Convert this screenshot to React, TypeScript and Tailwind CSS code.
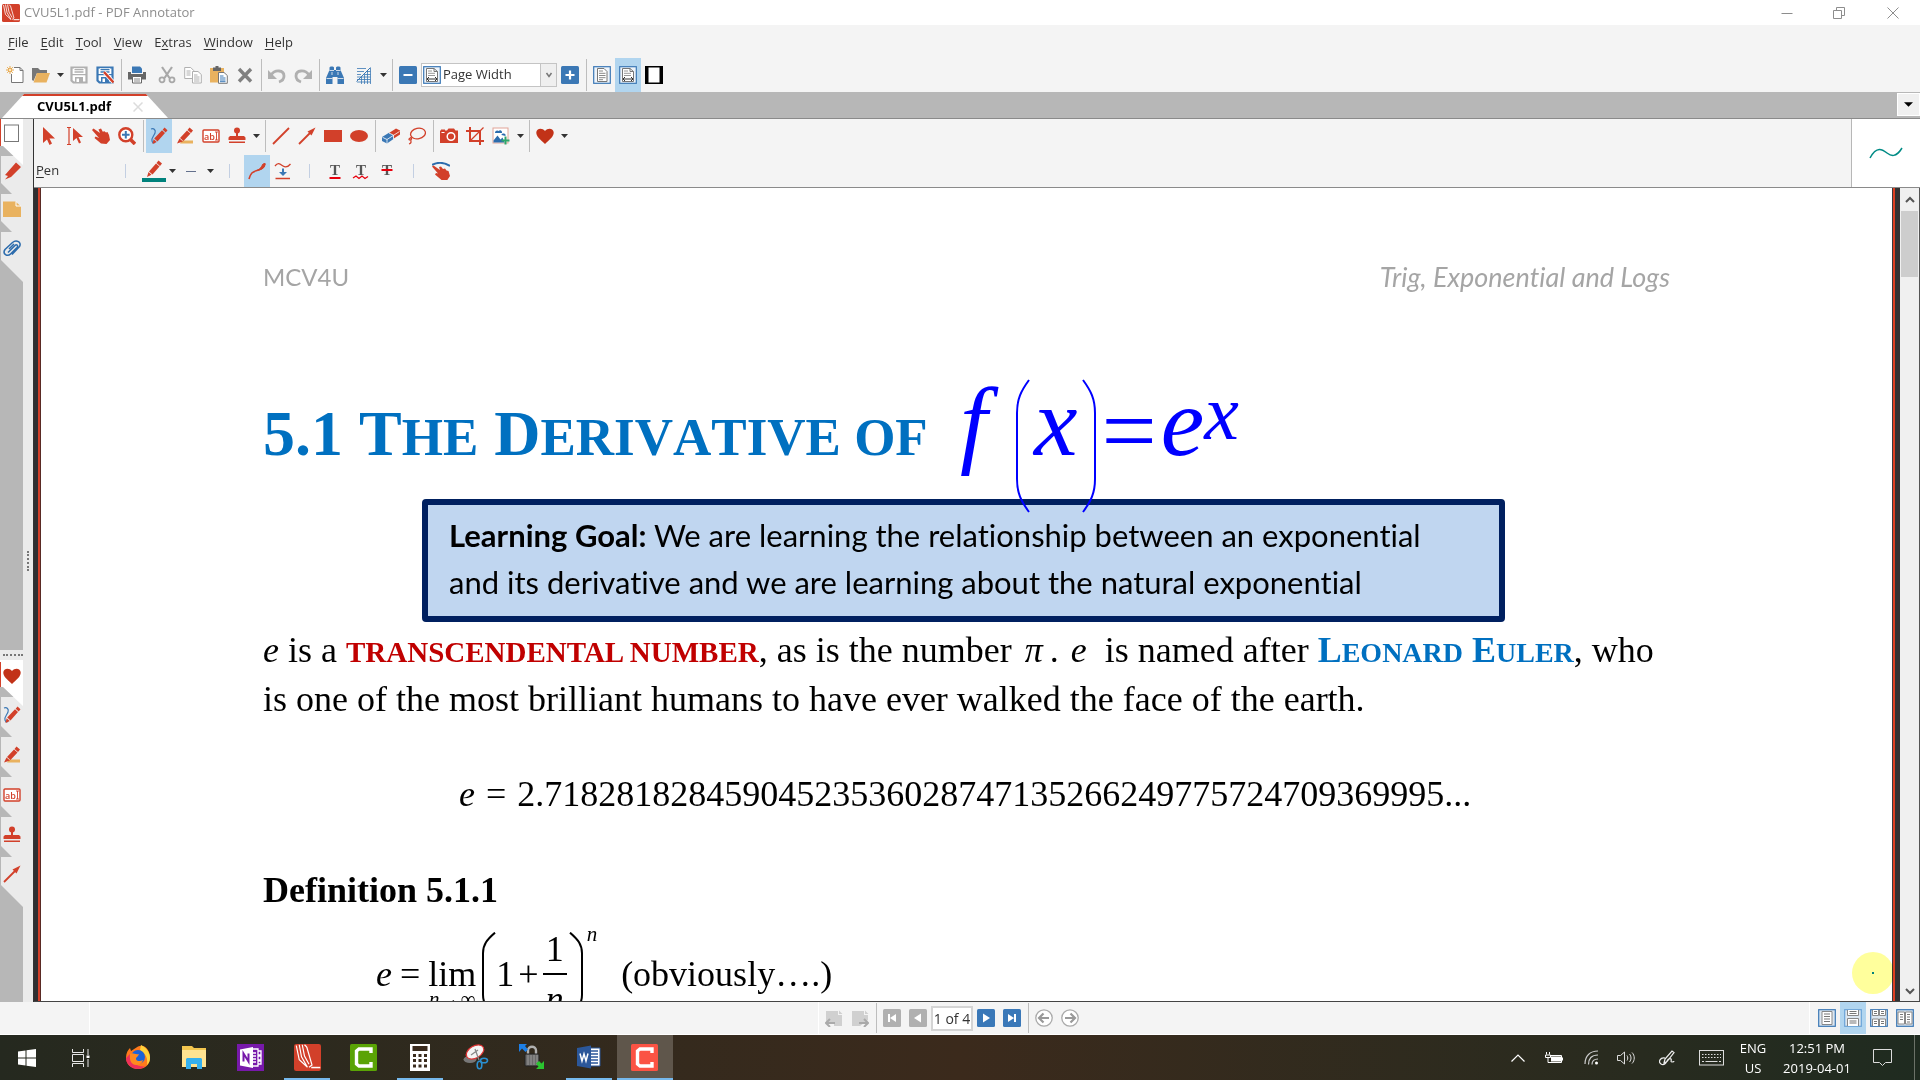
import { useState } from "react";
import type { ReactNode } from "react";
import { clsx } from "clsx";

interface IconProps {
  children: ReactNode;
  size?: string;
  box?: string;
}

const RED = "#d2402a";
const BLUE = "#3b78b5";
const GREY = "#b0b0b0";

function Icon({ children, size = "size-[18px]", box = "0 0 18 18" }: IconProps) {
  return (
    <svg viewBox={box} className={clsx("shrink-0", size)} fill="none" aria-hidden="true">
      {children}
    </svg>
  );
}

/* ---------- drawing tool icons (also used by the favourites strip) ---------- */

const PenIcon = () => (
  <Icon>
    <path d="M1 2c3-1 5 1 4 4S1 11 2 14s2 2 3 1" stroke={BLUE} strokeWidth="1.2" />
    <path d="M14.500.500l3 2.800-1.800 2.200-3-2.800z M12 3.300l3 2.800-7.500 8.400-3.300-3z M3.600 12.300l3.200 2.700L2.500 17z" fill={RED} />
  </Icon>
);

const MarkerIcon = () => (
  <Icon>
    <path d="M6 13.500h11v3H4z" fill="#e9b25f" />
    <path d="M13.500.5l3.500 3-2 2.500-3.500-3z M11 3.500L14.500 6.500l-7 7.500L4 11z M3.500 11.500l3.500 3L1 16.500z" fill={RED} />
  </Icon>
);

const TextBoxIcon = () => (
  <Icon>
    <rect x="1" y="3" width="16" height="12" rx="1" fill="#fff" stroke={RED} strokeWidth="1.400" />
    <path d="M13 5h3M13 13h3M14.500 5v8" stroke={RED} strokeWidth=".9" />
    <text x="2" y="12.500" fontSize="9" fontWeight="600" fontFamily="Open Sans, sans-serif" fill={RED}>ab</text>
  </Icon>
);

const StampIcon = () => (
  <Icon>
    <circle cx="9" cy="3.500" r="3" fill={RED} />
    <path d="M8 5h2v4h6l1.500 1.500V13H.5v-2.500L2 9h6z M1 14.500h16V16H1z" fill={RED} />
  </Icon>
);

const ArrowIcon = () => (
  <Icon>
    <path d="M1 17L13 5" stroke={RED} strokeWidth="1.800" />
    <path d="M17.500.5L9.500 4.500l4 4z" fill={RED} />
  </Icon>
);

const HeartIcon = () => (
  <Icon>
    <path d="M9 17C4 12.500.3 9.500.3 5.600.3 1.500 6 .3 9 4c3-3.700 8.700-2.500 8.700 1.600C17.700 9.500 14 12.500 9 17z" fill="#c23218" />
  </Icon>
);

const FloppyIcon = ({ color }: { color: string }) => (
  <>
    <path d="M1.500 1.500h15v15h-13l-2-2z" stroke={color} strokeWidth="2.200" fill="#fff" />
    <path d="M4 2h10v6H4z" fill="#fff" />
    <path d="M4.500 3.500h9M4.500 6h9M2 8.700h14" stroke={color} strokeWidth="1.300" />
    <path d="M5 11h8v6H5z" fill={color} />
    <path d="M6.500 12.500H9V16H6.500z" fill="#fff" />
  </>
);

const PageFrame = ({ children }: { children?: ReactNode }) => (
  <Icon>
    <rect x=".7" y=".7" width="16.600" height="16.600" fill="#eef4fb" stroke={BLUE} strokeWidth="1.200" />
    {children}
  </Icon>
);

const PageWidthIcon = () => (
  <PageFrame>
    <path d="M3.500 2.500h7.500l3.500 3v10h-11z" fill="#fff" stroke="#777" />
    <path d="M11 2.500v3h3.500" stroke="#777" />
    <path d="M5 5h4M5 7.300h7M5 9.500h7" stroke="#999" />
    <path d="M4 13h10M6 11l-2 2 2 2M12 11l2 2-2 2" stroke="#333" />
  </PageFrame>
);

const PageFullIcon = () => (
  <PageFrame>
    <path d="M4.500 2.500h6.500l3 3v10h-9.500z" fill="#fff" stroke="#777" />
    <path d="M6 5h4M6 7.300h6.500M6 9.500h6.500M6 11.700h6.500M6 13.700h4" stroke="#888" />
  </PageFrame>
);

const ScissorsIcon = () => (
  <Icon>
    <path d="M4 1l7.500 11M14 1L6.500 12" stroke="#a8a8a8" strokeWidth="2.200" />
    <circle cx="4" cy="13.800" r="2.500" stroke="#a8a8a8" strokeWidth="1.800" />
    <circle cx="14" cy="13.800" r="2.500" stroke="#a8a8a8" strokeWidth="1.800" />
  </Icon>
);

const PdfAnnotatorLogo = ({ size }: { size: string }) => (
  <Icon size={size}>
    <rect width="18" height="18" rx="1.500" fill={RED} />
    <path d="M1.500 1l2 9.500L9 15.500M3.500.5l1.500 8 4 7M5.500.5L7 8l3 5.500M8.500 2L7 .5M8.500 2l3.500 12-2 1.500" stroke="#fff" strokeWidth=".8" />
    <path d="M11.500 15.700h6" stroke="#fff" />
  </Icon>
);

/* ---------- small building blocks ---------- */

function Caret() {
  return (
    <span className="flex w-3 shrink-0 justify-center">
      <svg viewBox="0 0 7 4" className="h-1 w-[7px]" aria-hidden="true">
        <path d="M0 0h7L3.500 4z" fill="#333" />
      </svg>
    </span>
  );
}

function Sep({ light = false }: { light?: boolean }) {
  return (
    <span className="flex w-[6px] shrink-0 justify-center self-stretch py-px">
      <span className={clsx("w-px", light ? "my-2 bg-[#c3cfe2]" : "bg-[#bdbdbd]")} />
    </span>
  );
}

function Tool({ label, active = false, children }: { label: string; active?: boolean; children: ReactNode }) {
  return (
    <button
      type="button"
      aria-label={label}
      title={label}
      className={clsx("flex w-[26px] shrink-0 items-center justify-center self-stretch", active && "bg-[#b1d5ef]")}
    >
      {children}
    </button>
  );
}

function TitleBar() {
  return (
    <header className="flex h-[25px] shrink-0 items-center bg-white pl-[2px] text-[13px] text-[#8d8d8d]">
      <PdfAnnotatorLogo size="size-[18px]" />
      <span className="ml-1">CVU5L1.pdf - PDF Annotator</span>
      <div className="ml-auto flex">
        <button type="button" aria-label="Minimize" className="flex w-[52px] justify-center">
          <Icon size="size-3" box="0 0 12 12"><path d="M.5 6.500h11" stroke="#8d8d8d" /></Icon>
        </button>
        <button type="button" aria-label="Restore" className="flex w-[52px] justify-center">
          <Icon size="size-3" box="0 0 12 12"><path d="M.5 3.500h8v8h-8zM3.500 3V.5h8v8H9" stroke="#8d8d8d" /></Icon>
        </button>
        <button type="button" aria-label="Close" className="flex w-[55px] justify-center">
          <Icon size="size-3" box="0 0 12 12"><path d="M.5.5l11 11M11.500.5l-11 11" stroke="#8d8d8d" /></Icon>
        </button>
      </div>
    </header>
  );
}

const menus = [
  ["", "F", "ile"],
  ["", "E", "dit"],
  ["", "T", "ool"],
  ["", "V", "iew"],
  ["E", "x", "tras"],
  ["", "W", "indow"],
  ["", "H", "elp"],
];

function MenuBar() {
  return (
    <nav className="flex h-[33px] shrink-0 items-center gap-3 pt-[2px] pl-2 text-[13px] text-[#333]">
      {menus.map(([before, key, after]) => (
        <button type="button" key={before + key + after}>
          {before}<u className="underline-offset-2">{key}</u>{after}
        </button>
      ))}
    </nav>
  );
}

function MainToolbar() {
  return (
    <div className="flex h-[34px] shrink-0 items-center pl-[2px]">
      <Tool label="New">
        <Icon>
          <path d="M8 1.500h6l3 3v12H5.500V8" fill="#fff" stroke="#777" />
          <path d="M14 1.500v3h3" stroke="#777" />
          <path d="M4 0v8M0 4h8M1.200 1.200l5.600 5.600M6.800 1.200L1.200 6.800" stroke="#e9a94b" />
          <circle cx="4" cy="4" r="1.500" fill="#fff" stroke="#e9a94b" />
        </Icon>
      </Tool>
      <Tool label="Open">
        <Icon>
          <path d="M0 2h6l2 2h7v3H5L1.500 15 0 14z" fill="#777" />
          <path d="M5 7h13l-3.500 9.500H1.500z" fill="#e9b25f" />
        </Icon>
      </Tool>
      <Caret />
      <Tool label="Save"><Icon><FloppyIcon color="#b0b0b0" /></Icon></Tool>
      <Tool label="Save as">
        <Icon>
          <FloppyIcon color={BLUE} />
          <path d="M8 6l9.500 10.500" stroke="#fff" strokeWidth="4" />
          <path d="M8 6l9.500 10.500" stroke={RED} strokeWidth="2.400" />
        </Icon>
      </Tool>
      <Sep />
      <Tool label="Print">
        <Icon>
          <path d="M4 .5h8l2 2V7H4z" fill={BLUE} />
          <path d="M0 6h3v2h12V6h3v7.500H0z" fill="#666" />
          <path d="M4.500 10.500h9v6.500h-9z" fill="#fff" stroke="#666" />
          <path d="M6 13h6M6 15h6" stroke="#888" />
        </Icon>
      </Tool>
      <span className="w-1" />
      <Tool label="Cut"><ScissorsIcon /></Tool>
      <Tool label="Copy">
        <Icon>
          <path d="M.7 1.500h6l3 3v8h-9z" fill="#fff" stroke={GREY} />
          <path d="M2.500 5h4M2.500 7h4M2.500 9h4" stroke={GREY} />
          <path d="M8.500 5.500h5.500l3.300 3v8.500H8.500z" fill="#fff" stroke={GREY} />
          <path d="M10 9h3.500M10 11h5.500M10 13h5.500M10 15h5.500" stroke={GREY} />
        </Icon>
      </Tool>
      <Tool label="Paste">
        <Icon>
          <path d="M0 2h14v14.500H0z" fill="#e9b25f" />
          <path d="M3 1.500h2.500V0h3v1.500H11V5H3z" fill="#666" />
          <path d="M8.500 6.500H14l3.300 3v7.800H8.500z" fill="#fff" stroke="#777" />
          <path d="M10 10h3.500M10 12h5.500M10 14h5.500M10 15.700h5.500" stroke={BLUE} />
        </Icon>
      </Tool>
      <Tool label="Delete">
        <Icon><path d="M3 3l12 12.500M15 3L3 15.500" stroke="#808080" strokeWidth="3.400" /></Icon>
      </Tool>
      <Sep />
      <Tool label="Undo">
        <Icon>
          <path d="M3 9c4-6 13-5 13 1 0 3-2 5-5 6" stroke={GREY} strokeWidth="2.800" />
          <path d="M0 4v9h9z" fill={GREY} />
        </Icon>
      </Tool>
      <Tool label="Redo">
        <Icon>
          <path d="M15 9C11 3 2 4 2 10c0 3 2 5 5 6" stroke={GREY} strokeWidth="2.800" />
          <path d="M18 4v9H9z" fill={GREY} />
        </Icon>
      </Tool>
      <Sep />
      <Tool label="Find">
        <Icon>
          <path d="M3.500 1.500C3.500 0 8 0 8 1.500V4h2V1.500C10 0 14.500 0 14.500 1.500V4L18 12v6h-6.500v-7h-5v7H0v-6l3.500-8z" fill={BLUE} />
          <path d="M3.500 4.500H8M10 4.500h4.500M.5 12.500h6M11.500 12.500h6M6 6v3M12 6v3" stroke="#f4f4f4" strokeWidth=".8" />
        </Icon>
      </Tool>
      <span className="w-[3px]" />
      <Tool label="Grid">
        <Icon>
          <path d="M2 2.500h9M2 5.500h7M2 8.500h4M2 11h13.500M2 13.500h13.500M2 16h13.500M6.500 18v-8M9.500 18V7M12.500 18V4M15.500 18V2M10 8.500h5.500M12 5.500h3.500" stroke={BLUE} strokeWidth=".8" />
          <path d="M1.500 15.500L15.500 1.500" stroke={BLUE} />
        </Icon>
      </Tool>
      <Caret />
      <Sep />
      <Tool label="Zoom out">
        <Icon>
          <rect width="18" height="18" rx="1.500" fill={BLUE} />
          <path d="M4.500 9h9" stroke="#fff" strokeWidth="2" />
        </Icon>
      </Tool>
      <label className="flex h-6 w-[136px] shrink-0 items-center border border-[#c4c4c4] bg-white pl-px">
        <PageWidthIcon />
        <select aria-label="Zoom" className="h-full min-w-0 flex-1 appearance-none bg-white pl-[2px] text-[13px] text-[#333]">
          <option>Page Width</option>
        </select>
        <span className="flex h-full w-4 items-center justify-center border-l border-[#c4c4c4] bg-[#efefef]">
          <Icon size="size-2" box="0 0 8 8"><path d="M1.500 2L4 5.500 6.500 2" stroke="#777" strokeWidth="1.500" /></Icon>
        </span>
      </label>
      <Tool label="Zoom in">
        <Icon>
          <rect width="18" height="18" rx="1.500" fill={BLUE} />
          <path d="M4.500 9h9M9 4.500v9" stroke="#fff" strokeWidth="2.200" />
        </Icon>
      </Tool>
      <Sep />
      <Tool label="Full page"><PageFullIcon /></Tool>
      <Tool label="Page width" active><PageWidthIcon /></Tool>
      <Tool label="Full screen">
        <Icon>
          <rect width="18" height="18" fill="#000" />
          <rect x="3.500" y="1.500" width="11" height="15" fill="#fff" />
        </Icon>
      </Tool>
    </div>
  );
}

function TabStrip() {
  return (
    <div className="flex h-[27px] shrink-0 items-end border-b border-[#8a8a8a] bg-[#b7b7b7] pl-[2px]">
      <div className="flex h-6 w-[166px] flex-col bg-white [clip-path:polygon(22px_0,144px_0,100%_100%,0_100%)]">
        <span className="h-[2px] bg-[#d2402a]" />
        <div className="flex flex-1 items-center justify-between pr-[25px] pl-[35px]">
          <span className="text-[13px] font-bold text-black">CVU5L1.pdf</span>
          <button type="button" aria-label="Close tab">
            <Icon size="size-[10px]" box="0 0 10 10"><path d="M.5.5l9 9M9.500.5l-9 9" stroke="#dcdcdc" strokeWidth="1.500" /></Icon>
          </button>
        </div>
      </div>
      <button type="button" aria-label="Tab list" className="mb-[2px] ml-auto flex h-[23px] w-[23px] items-center justify-center border border-white bg-[#f0f0f0]">
        <svg viewBox="0 0 10 5" className="h-[5px] w-[9px]" aria-hidden="true"><path d="M0 0h10L5 5z" fill="#000" /></svg>
      </button>
    </div>
  );
}

/* ---------- left side bar ---------- */

const firstTab = "relative z-10 h-[46px] -mb-[9px] bg-white [clip-path:polygon(0_0,100%_0,100%_100%,3px_27px,0_27px)]";
const midTab = "bg-[#ebebeb] [clip-path:polygon(1px_0,100%_0,100%_100%,12px_100%,1px_calc(100%-11px))]";
const lastTab = "h-[50px] bg-[#ebebeb] pb-4 [clip-path:polygon(1px_0,100%_0,100%_100%,1px_28px)]";
const topTab = clsx(midTab, "h-[38px] pb-2");
const favTab = clsx(midTab, "h-10 pb-1");

function SideTab({ label, className, active = false, children }: { label: string; className: string; active?: boolean; children: ReactNode }) {
  return (
    <button type="button" aria-label={label} className={clsx("flex w-[23px] shrink-0 items-center justify-end", className)}>
      {active && <span className="mr-[2px] h-7 w-[2px] shrink-0 bg-[#d2402a]" />}
      {children}
      <span className="w-[2px] shrink-0" />
    </button>
  );
}

function SideBar() {
  return (
    <aside className="flex w-[33px] shrink-0 bg-[#ebebeb]">
      <div className="flex w-[23px] flex-col bg-[#b7b7b7]">
        <div className="flex flex-1 flex-col">
          <SideTab label="Pages" className={clsx(firstTab, "pb-[18px]")} active>
            <Icon><rect x="1.500" y="1" width="14" height="16.500" fill="#fff" stroke="#777" /></Icon>
          </SideTab>
          <SideTab label="Annotations" className={topTab}>
            <Icon><path d="M13 .5L18 5 8 15l-6 2.500L5 14l-3-1z" fill={RED} /></Icon>
          </SideTab>
          <SideTab label="Bookmarks" className={topTab}>
            <Icon>
              <path d="M0 1.500h12.500l5.500 5V17H0z" fill="#e9b25f" />
              <path d="M13 1.500V6h5" stroke="#fff" />
            </Icon>
          </SideTab>
          <SideTab label="Attachments" className={lastTab}>
            <Icon>
              <path d="M5 12.500L12 5.500c1.500-1.500 3.500 0 2 2L7.500 14c-3 3-8.500 0-5.500-4.500L9.500 2.500c4-3.500 9.500 0 7 4L9 14.500M6 9l5-5" stroke="#2c6cad" strokeWidth="1.500" />
            </Icon>
          </SideTab>
        </div>
        <div className="flex h-[10px] shrink-0 items-center bg-[#ebebeb] pl-[3px]">
          <span className="w-5 border-t-2 border-dotted border-[#777]" />
        </div>
        <div className="flex h-[342px] shrink-0 flex-col">
          <SideTab label="Favorites" className={clsx(firstTab, "pb-[14px]")} active><HeartIcon /></SideTab>
          <SideTab label="Pen" className={favTab}><PenIcon /></SideTab>
          <SideTab label="Marker" className={favTab}><MarkerIcon /></SideTab>
          <SideTab label="Text" className={favTab}><TextBoxIcon /></SideTab>
          <SideTab label="Stamp" className={favTab}><StampIcon /></SideTab>
          <SideTab label="Arrow" className={lastTab}><ArrowIcon /></SideTab>
        </div>
      </div>
      <div className="flex w-[10px] items-center justify-center">
        <span className="h-5 border-l-2 border-dotted border-[#777]" />
      </div>
    </aside>
  );
}

/* ---------- annotation toolbars ---------- */

function TextMark({ children }: { children: ReactNode }) {
  return (
    <Icon>
      <text x="9" y="13" textAnchor="middle" fontSize="15" fontWeight="700" fontFamily="Liberation Serif, serif" fill="#555">T</text>
      {children}
    </Icon>
  );
}

function ToolPanel() {
  return (
    <div className="flex h-[69px] shrink-0 border-b border-[#8a8a8a]">
      <div className="flex min-w-0 flex-1 flex-col pl-[2px]">
        <div className="flex h-[34px] items-center">
          <Tool label="Select"><Icon><path d="M3 0v16l4-3.500 2.500 5.500 2.500-1.500L9.500 11.500h5.500z" fill={RED} /></Icon></Tool>
          <Tool label="Select text">
            <Icon>
              <path d="M7 1v13l3.500-3 2.500 5.500 2-1L12.500 10H17z" fill={RED} />
              <path d="M1 .5h4M1 17.500h4M3 .5v17" stroke={RED} strokeWidth="1.200" />
            </Icon>
          </Tool>
          <Tool label="Pan">
            <Icon><path d="M0 3l1.500-1.500L8 6 6.500 2.500 9 1.500l2 3.500 1-1 2 1.500 1.500-.5 1.500 3 1 5-3.500 4-5.500-.5-6.500-5.500 1-1.500L7 11z" fill={RED} /></Icon>
          </Tool>
          <Tool label="Zoom">
            <Icon>
              <path d="M12 12l5 5" stroke={RED} strokeWidth="3.600" />
              <circle cx="7.800" cy="7.800" r="6.500" fill="#fff" stroke={RED} strokeWidth="2.400" />
              <path d="M4 7.800h7.600M7.800 4v7.600" stroke={BLUE} strokeWidth="2" />
            </Icon>
          </Tool>
          <Sep />
          <Tool label="Pen" active><PenIcon /></Tool>
          <Tool label="Marker"><MarkerIcon /></Tool>
          <Tool label="Text"><TextBoxIcon /></Tool>
          <Tool label="Stamp"><StampIcon /></Tool>
          <Caret />
          <Sep />
          <Tool label="Line"><Icon><path d="M1 17L17 1" stroke={RED} strokeWidth="1.800" /></Icon></Tool>
          <Tool label="Arrow"><ArrowIcon /></Tool>
          <Tool label="Rectangle"><Icon><path d="M0 3h18v12H0z" fill={RED} /></Icon></Tool>
          <Tool label="Ellipse"><Icon><ellipse cx="9" cy="9" rx="9" ry="6" fill={RED} /></Icon></Tool>
          <Sep />
          <Tool label="Eraser">
            <Icon>
              <path d="M7 6L14 1.500l4 2V7.500l-7 4.500-4-2z" fill={RED} />
              <path d="M0 10L7 5.800l4.500 2.200v4L5 16.500 0 14z" fill={BLUE} />
              <path d="M.5 10.300L5 12.500 17.500 4.500M5 12.500v4M7 6l4.500 2.200v4" stroke="#fff" strokeWidth=".8" />
            </Icon>
          </Tool>
          <Tool label="Lasso">
            <Icon>
              <ellipse cx="10" cy="6.500" rx="7.500" ry="5.300" transform="rotate(-12 10 6.500)" stroke={RED} strokeWidth="1.300" />
              <path d="M4 10c-3 1-4 3-2 3s2-3 1-1 2 4-2 5" stroke={RED} strokeWidth="1.200" />
            </Icon>
          </Tool>
          <Sep />
          <Tool label="Camera">
            <Icon>
              <path d="M0 3.500h1V2.500h4v1h2l1.500-2h5.500l1.500 2H18V16H0z" fill={RED} />
              <circle cx="11" cy="9.500" r="3.800" stroke="#fff" strokeWidth="1.500" />
              <path d="M1.500 5.500h3" stroke="#fff" />
            </Icon>
          </Tool>
          <Tool label="Crop">
            <Icon>
              <path d="M0 4h14v14M4 0v14h14" stroke={RED} strokeWidth="2" />
              <path d="M17.500.5L5 13" stroke={RED} strokeWidth="1.300" />
            </Icon>
          </Tool>
          <Tool label="Insert image">
            <Icon>
              <rect x="1" y="1" width="15" height="15" fill="#fff" stroke="#e2a497" />
              <path d="M3 6c0-3 3-3 3.500-2 2-2 4 0 3.500 2zM9.500 8c0-2 3-2 4-.5V9zM1.500 15.500v-2l4-5 3 4 2-2 2 5z" fill="#2c6cad" />
              <path d="M13.500 9.500v8M9.500 13.500h8" stroke="#2fa56b" strokeWidth="2" />
            </Icon>
          </Tool>
          <Caret />
          <Sep />
          <Tool label="Favorites"><HeartIcon /></Tool>
          <Caret />
        </div>
        <div className="flex h-[34px] items-center pt-[2px]">
          <span className="w-[86px] text-[13px] text-[#333]"><u className="underline-offset-2">P</u>en</span>
          <Sep light />
          <span className="w-[14px]" />
          <button type="button" aria-label="Pen color" className="flex flex-col items-center">
            <Icon>
              <path d="M13.500.5l3.500 3-2 2.500-3.500-3z M11 3.500l3.500 3-7 8L4 11.500z M3.500 12l3 2.700L2 17z" fill={RED} />
            </Icon>
            <span className="h-1 w-6 bg-[#00827c]" />
          </button>
          <Caret />
          <Tool label="Line width"><span className="h-px w-[10px] bg-[#63708c]" /></Tool>
          <Caret />
          <span className="w-[10px]" />
          <Sep light />
          <span className="w-3" />
          <Tool label="Freehand" active>
            <Icon><path d="M1 17c2-6 3-7 8-8.500S16 6 17 1.500" stroke={RED} strokeWidth="1.600" /><path d="M9 8.500c3-1 4-3 6-6.500l2-.5c0 4-3 6-8 7z" fill={RED} stroke={RED} /></Icon>
          </Tool>
          <Tool label="Smooth">
            <Icon>
              <path d="M1 4c3-4 5-2 8 0s5 1 7.500-2M1.500 16.500h14.500" stroke={RED} strokeWidth="1.300" />
              <path d="M8 6.500h2V10h3l-4 4-4-4h3z" fill={BLUE} />
            </Icon>
          </Tool>
          <span className="w-[10px]" />
          <Sep light />
          <span className="w-[10px]" />
          <Tool label="Underline"><TextMark><path d="M3.500 16h11" stroke="#e8000d" strokeWidth="2" /></TextMark></Tool>
          <Tool label="Squiggly underline"><TextMark><path d="M1 16l3-2 3 2.500 3-2.500 3 2.500 3-2" stroke="#e8000d" strokeWidth="1.300" /></TextMark></Tool>
          <Tool label="Strike out"><TextMark><path d="M3.500 8h11" stroke="#e8000d" strokeWidth="2" /></TextMark></Tool>
          <span className="w-[10px]" />
          <Sep light />
          <span className="w-3" />
          <Tool label="Touch">
            <Icon>
              <path d="M0 3c5-3 12-3 18 1" stroke="#2c6cad" strokeWidth="2" />
              <path d="M0 4.500L1.500 3.500 8 8 7 5l2-.5 2 2.500 2-.5 1.500 2 2 .5 1.500 5-3 4.500-5.500-.5-6.500-5.500 1-1.500 2 .5z" fill={RED} />
            </Icon>
          </Tool>
        </div>
      </div>
      <div className="flex w-[69px] shrink-0 items-center justify-center border-l border-[#b7b7b7] bg-white">
        <svg viewBox="0 0 34 12" className="h-3 w-[34px]" fill="none" aria-hidden="true">
          <path d="M1 11C8-2 14 3 18 6s9 5 15-5" stroke="#008b85" strokeWidth="1.500" />
        </svg>
      </div>
    </div>
  );
}

/* ---------- the PDF page ---------- */

function Fence({ side, size }: { side: "left" | "right"; size: string }) {
  return (
    <svg viewBox="0 0 14 134" preserveAspectRatio="none" className={clsx("shrink-0", size)} fill="none" aria-hidden="true">
      <path
        d={side === "left" ? "M13 1C5 12 1 20 1 34v66c0 14 4 22 12 33" : "M1 1c8 11 12 19 12 33v66c0 14-4 22-12 33"}
        stroke="currentColor"
        strokeWidth="2"
        vectorEffect="non-scaling-stroke"
      />
    </svg>
  );
}

function PdfPage() {
  return (
    <article className="min-w-0 flex-1 overflow-hidden bg-white px-[222px] pt-[73px] font-['Liberation_Serif',serif] text-[36px] leading-[49px] text-black">
      <div className="flex h-8 items-center justify-between font-['Lato',sans-serif] leading-8 text-[#a5a5a5] [font-variant-ligatures:none]">
        <span className="text-[24px]">MCV4U</span>
        <em className="text-[27px]">Trig, Exponential and Logs</em>
      </div>

      <h1 className="relative z-10 mt-[86px] flex h-[134px] items-baseline whitespace-nowrap text-[#0000ff]">
        <span className="w-[685px] text-[64px] leading-[64px] font-bold text-[#0070c0] [font-kerning:none]">
          5.1 T<span className="text-[53px]">HE</span> D<span className="text-[53px]">ERIVATIVE OF</span>
        </span>
        <i className="w-[68px] pl-3 text-[98px] leading-[86px]">f</i>
        <span className="self-start"><Fence side="left" size="h-[134px] w-[14px]" /></span>
        <i className="px-1 text-[98px] leading-[86px]">x</i>
        <span className="self-start"><Fence side="right" size="h-[134px] w-[14px]" /></span>
        <i className="pl-[6px] text-[98px] leading-[86px]">
          <span className="pr-1 align-[-8px] leading-[40px] not-italic">=</span>
          e<span className="align-[16px] text-[78px] leading-[40px]">x</span>
        </i>
      </h1>

      <div className="-mt-[14px] mr-[165px] ml-[159px] rounded-sm border-[6px] border-[#002060] bg-[#c0d6f0] pt-[7px] pb-[10px] pl-[21px] font-['Lato',sans-serif] text-[31px] leading-[47px] whitespace-nowrap [font-variant-ligatures:none]">
        <b>Learning Goal:</b> We are learning the relationship between an exponential
        <br />
        and its derivative and we are learning about the natural exponential
      </div>

      <p className="mt-1 whitespace-nowrap">
        <i>e</i> is a <b className="text-[29px] leading-none text-[#c00000]">TRANSCENDENTAL NUMBER</b>, as is the number{" "}
        <i className="px-1">π</i><span className="px-[3px]">.</span> <i>e</i>&nbsp; is named after{" "}
        <b className="text-[#0070c0]">
          L<span className="text-[28px] leading-none">EONARD</span> E<span className="text-[28px] leading-none">ULER</span>
        </b>
        , who
        <br />
        is one of the most brilliant humans to have ever walked the face of the earth.
      </p>

      <p className="mt-[46px] pl-[196px] whitespace-nowrap">
        <i>e</i> <span className="px-[2px]">=</span> 2.71828182845904523536028747135266249775724709369995...
      </p>

      <h2 className="mt-[47px] font-bold">Definition 5.1.1</h2>

      <div className="mt-[15px] flex h-[88px] items-center pl-[113px] leading-[36px]">
        <i>e</i>
        <span className="px-2">=</span>
        <span className="flex flex-col items-center pt-[14px]">
          lim
          <span className="text-[21px] leading-[14px]"><i>n</i>→∞</span>
        </span>
        <span className="pl-[6px]"><Fence side="left" size="h-[84px] w-[14px]" /></span>
        <span>1</span>
        <span className="px-1">+</span>
        <span className="flex flex-col items-center">
          <span>1</span>
          <span className="my-[6px] h-[2px] w-6 bg-black" />
          <i>n</i>
        </span>
        <span className="pl-[2px]"><Fence side="right" size="h-[84px] w-[14px]" /></span>
        <i className="self-start pl-1 text-[21px] leading-[8px]">n</i>
        <span className="pl-6">(obviously….)</span>
      </div>
    </article>
  );
}

function Viewer() {
  return (
    <div className="relative flex min-h-0 flex-1 border-b border-[#444]">
      <span className="w-1 bg-[#2f2f31]" />
      <span className="w-[3px] border-r border-[#5a2a24] bg-[#d2402a]" />
      <PdfPage />
      <span className="w-[3px] border-l border-[#3a3a3a] bg-[#de3f22]" />
      <span className="w-[5px] bg-[#333]" />
      <div className="flex w-5 flex-col items-center border-r border-[#555] bg-[#f0f0f0]">
        <button type="button" aria-label="Scroll up" className="flex h-[23px] items-center justify-center">
          <Icon size="size-[10px]" box="0 0 10 10"><path d="M1 7l4-4 4 4" stroke="#555" strokeWidth="2" /></Icon>
        </button>
        <span className="h-[66px] w-[17px] bg-[#cdcdcd]" />
        <button type="button" aria-label="Scroll down" className="mt-auto flex h-[20px] items-center justify-center">
          <Icon size="size-[10px]" box="0 0 10 10"><path d="M1 3l4 4 4-4" stroke="#555" strokeWidth="2" /></Icon>
        </button>
      </div>
      {/* pointer highlight */}
      <span className="absolute right-[26px] bottom-[7px] z-20 flex size-[42px] items-center justify-center rounded-full bg-[#ffff9c] mix-blend-multiply">
        <span className="size-[2px] bg-[#00827c]" />
      </span>
    </div>
  );
}

/* ---------- status bar ---------- */

function NavButton({ label, disabled = false, d }: { label: string; disabled?: boolean; d: string }) {
  return (
    <Tool label={label}>
      <Icon>
        <rect width="18" height="18" rx="1.500" fill={disabled ? GREY : "#3a78b8"} />
        <path d={d} fill="#fff" />
      </Icon>
    </Tool>
  );
}

const layouts = [
  { label: "Single page", d: "M4 2.500h10v13H4z", lines: "M6 5h6M6 7.500h6M6 10h6M6 12.500h6" },
  { label: "Continuous", d: "M3.500 1v5.500h11V1M3.500 17V9.500h11V17", lines: "M5.500 2.500h7M5.500 4.500h7M5.500 12h7M5.500 14h7" },
  { label: "Two pages continuous", d: "M2.500 1v5.500h6V1M9.500 1v5.500h6V1M2.500 17v-7h6v7M9.500 17v-7h6v7", lines: "M4 2.500h3M11 2.500h3M4 4.500h3M11 4.500h3M4 12.500h3M11 12.500h3M4 14.500h3M11 14.500h3" },
  { label: "Two pages", d: "M2 3h6.500v12H2zM9.500 3H16v12H9.500z", lines: "M4 5.500h3M4 8h3M4 10.500h3M11 5.500h3M11 8h3M11 10.500h3M11 13h3" },
];

function StatusBar() {
  const [page, setPage] = useState("1 of 4");

  return (
    <div className="flex h-[33px] shrink-0 items-center border-b border-white bg-[#f4f4f4]">
      <div className="flex flex-1 justify-between self-stretch">
        <span className="ml-[89px] w-px bg-white" />
        <span className="mr-[2px] w-px bg-white" />
      </div>
      <div className="flex items-center self-stretch pr-4">
        <Tool label="Import page">
          <Icon><path d="M1 2h12v4h4v11H9v-3H1z" fill="#d0d0d0" /><path d="M14 1.500V5h3.500z" fill="#d0d0d0" /><path d="M1 14h9M5 10l-4 4 4 4" stroke="#aaa" strokeWidth="2" /></Icon>
        </Tool>
        <Tool label="Export page">
          <Icon><path d="M1 2h12v4h4v5L9 17H1z" fill="#d0d0d0" /><path d="M14 1.500V5h3.500z" fill="#d0d0d0" /><path d="M8 14h9M13 10l4 4-4 4" stroke="#aaa" strokeWidth="2" /></Icon>
        </Tool>
        <Sep />
        <NavButton label="First page" disabled d="M5 5h2v8H5zM13 5v8L7 9z" />
        <NavButton label="Previous page" disabled d="M12 4.500v9L5 9z" />
        <input
          aria-label="Page"
          value={page}
          onChange={(e) => setPage(e.target.value)}
          className="h-[25px] w-[42px] shrink-0 border-2 border-[#d4d4d4] bg-white text-center text-[14px] text-[#333]"
        />
        <NavButton label="Next page" d="M6 4.500v9L13 9z" />
        <NavButton label="Last page" d="M5 5v8l6-4zM11 5h2v8h-2z" />
        <Sep />
        <Tool label="Back">
          <Icon><circle cx="9" cy="9" r="8.200" fill="#fff" stroke="#aaa" strokeWidth="1.300" /><path d="M4 9h10M8.500 4.500L4 9l4.500 4.500" stroke="#999" strokeWidth="2.200" /></Icon>
        </Tool>
        <Tool label="Forward">
          <Icon><circle cx="9" cy="9" r="8.200" fill="#fff" stroke="#aaa" strokeWidth="1.300" /><path d="M4 9h10M9.500 4.500L14 9l-4.500 4.500" stroke="#999" strokeWidth="2.200" /></Icon>
        </Tool>
      </div>
      <div className="flex flex-1 items-center justify-end self-stretch">
        <span className="mr-1 w-px self-stretch bg-white" />
        {layouts.map((l, i) => (
          <Tool key={l.label} label={l.label} active={i === 1}>
            <Icon>
              <rect x=".7" y=".7" width="16.600" height="16.600" fill="#dce6f0" stroke={i === 1 ? "#6aa3d8" : BLUE} strokeWidth="1.200" />
              <path d={l.d} fill="#fff" stroke="#888" />
              <path d={l.lines} stroke="#777" strokeWidth="1.200" />
            </Icon>
          </Tool>
        ))}
        <span className="w-[2px]" />
      </div>
    </div>
  );
}

/* ---------- Windows task bar ---------- */

const CamtasiaIcon = ({ color }: { color: string }) => (
  <Icon size="size-[27px]" box="0 0 27 27">
    <rect width="27" height="27" rx="1.500" fill={color} />
    <path d="M21 9V5H9L6.500 7v13L9 22h12v-4" stroke="#fff" strokeWidth="3.400" />
  </Icon>
);

const apps = [
  {
    label: "Firefox",
    icon: (
      <Icon size="size-6" box="0 0 24 24">
        <path d="M12 1.500c7-3 12 4 12 11s-5 11.500-12 11.500S0 19 0 12.500C0 8 2 5 4 3l1 3z" fill="#ff7a1c" />
        <path d="M15 0c6 3 9 8 9 13 0 3-1 5-3 7 1-7-1-11-7-15z" fill="#ffd23c" />
        <path d="M0 13c0 6 5 11 12 11 3 0 5-1 7-2.500C11 22 5 18 4 9z" fill="#f0305a" />
        <circle cx="12" cy="12" r="7" fill="#1b63d8" />
        <path d="M4 9c3-2 5 1 9 0-1 3-3 3-3 5s4 3 7 1c-1 4-4 5-7 5-4 0-7-4-6-11z" fill="#ff8a1f" />
      </Icon>
    ),
  },
  {
    label: "File Explorer",
    icon: (
      <Icon size="size-6" box="0 0 24 24">
        <path d="M0 1h10l2 2h12v18H0z" fill="#f3c64f" />
        <path d="M0 5h24v17H0z" fill="#ffe391" />
        <path d="M4 24V14l1-1h14l1 1v10h-5v-5H9v5z" fill="#35b0ee" />
      </Icon>
    ),
  },
  {
    label: "OneNote",
    icon: (
      <Icon size="size-[27px]" box="0 0 27 27">
        <rect width="27" height="27" fill="#7719aa" />
        <path d="M15 5h6v17h-6M21 7h3v4h-3M21 12h3v4h-3M21 17h3v3h-3M16 9h3M16 12h3M16 15h3M16 18h3" stroke="#fff" strokeWidth="1.300" />
        <path d="M3 5.500L16 3v21L3 21.500z" fill="#fff" />
        <path d="M6.500 17.500v-8l5 8v-8" stroke="#7719aa" strokeWidth="2" />
      </Icon>
    ),
  },
  { label: "PDF Annotator", running: true, icon: <PdfAnnotatorLogo size="size-[27px]" /> },
  { label: "Camtasia", icon: <CamtasiaIcon color="#5aa305" /> },
  {
    label: "Calculator",
    running: true,
    icon: (
      <Icon size="h-[27px] w-5" box="0 0 20 27">
        <rect width="20" height="27" fill="#fff" />
        <path d="M2.500 2h15v5h-15zM3 10h3v3H3zM8.500 10h3v3h-3zM14 10h3v3h-3zM3 15h3v3H3zM8.500 15h3v3h-3zM14 15h3v3h-3zM3 20.500h3v3H3zM8.500 20.500h3v3h-3zM14 20.500h3v3h-3z" fill="#3a2b1d" />
      </Icon>
    ),
  },
  {
    label: "Snipping Tool",
    icon: (
      <Icon size="size-[26px]" box="0 0 26 26">
        <ellipse cx="7" cy="15.500" rx="6.500" ry="3.500" fill="#777" />
        <ellipse cx="12" cy="8" rx="9.500" ry="6" transform="rotate(-30 12 8)" fill="#f4f4f4" stroke="#d33" strokeWidth="1.200" />
        <path d="M12 5l4 11M8 11l7-5" stroke="#888" strokeWidth="1.300" />
        <ellipse cx="21" cy="16.500" rx="3.500" ry="2.300" stroke="#2a8fd0" strokeWidth="1.600" />
        <ellipse cx="16.500" cy="21" rx="2.300" ry="3.800" stroke="#2a8fd0" strokeWidth="1.600" />
      </Icon>
    ),
  },
  {
    label: "Network lock",
    icon: (
      <Icon size="size-[26px]" box="0 0 26 26">
        <path d="M9 12V6.500c0-5 8-5 8 0V12" stroke="#b0b0b0" strokeWidth="2.400" />
        <rect x="6" y="10" width="14" height="12" rx="1" fill="#6a6a6a" stroke="#222" />
        <path d="M9 11v10M12 11v10M15 11v10M18 11v10" stroke="#999" />
        <path d="M0 0h8L6 2l3 3.500L6.500 8 3 4.500 0 8z" fill="#1d7fe6" />
        <path d="M25 25h-8l2.500-2.500L17 19.500l3-2.500 2.500 2.500L25 17z" fill="#2bc430" />
      </Icon>
    ),
  },
  {
    label: "Word",
    running: true,
    icon: (
      <Icon size="size-6" box="0 0 24 24">
        <path d="M13 3h10v18H13z" fill="#fff" stroke="#2b579a" />
        <path d="M14 6h7M14 9h7M14 12h7M14 15h7M14 18h7" stroke="#2b579a" strokeWidth="1.300" />
        <path d="M0 3L14 .5v23L0 21z" fill="#2b579a" />
        <path d="M3 8.500L5 16l2-7 2 7 2-7.500" stroke="#fff" strokeWidth="1.500" />
      </Icon>
    ),
  },
  { label: "Camtasia Recorder", running: true, active: true, icon: <CamtasiaIcon color="#fb5344" /> },
];

function TaskBar() {
  return (
    <footer className="flex h-[45px] shrink-0 items-stretch bg-linear-to-r from-[#25291f] via-[#3b2a1c] to-[#1f2b20] text-[13px] leading-5 text-white">
      <button type="button" aria-label="Start" className="flex w-[54px] items-center justify-center">
        <Icon size="size-[18px]">
          <path d="M0 2.500L7.500 1.500V8.500H0zM8.500 1.300L18 0v8.500H8.500zM0 9.500h7.500v7L0 15.500zM8.500 9.500H18V18l-9.500-1.300z" fill="#fff" />
        </Icon>
      </button>
      <button type="button" aria-label="Task view" className="flex w-[54px] items-center justify-center">
        <Icon size="size-[18px]">
          <path d="M.5 0v3.500h11V0M.5 18v-3.500h11V18M.5 5.500h11v7H.5zM16 0v6M16 10v8" stroke="#e8e8e8" />
          <path d="M14.500 6.500h3v2.500h-3z" fill="#fff" />
        </Icon>
      </button>
      <div className="ml-[2px] grid w-[563px] grid-cols-10">
        {apps.map((app) => (
          <button
            type="button"
            key={app.label}
            aria-label={app.label}
            className={clsx("flex flex-col items-center", app.active && "bg-[#5f564b]")}
          >
            <span className="flex flex-1 items-center pt-px">{app.icon}</span>
            <span className={clsx("h-[2px]", app.running && "bg-[#76b9ed]", app.active ? "w-full" : "w-[46px]")} />
          </button>
        ))}
      </div>
      <div className="ml-auto flex items-center">
        <Icon size="h-2 w-[14px]" box="0 0 14 8"><path d="M.5 7.500L7 1l6.500 6.500" stroke="#fff" strokeWidth="1.200" /></Icon>
        <span className="w-5" />
        <Icon size="h-3 w-[18px]" box="0 0 18 12">
          <path d="M5 3.500h11.500v7H5" stroke="#fff" /><path d="M6 4.500h10v5H6zM17 5.500h1v3h-1z" fill="#fff" />
          <path d="M1.500 0v2.500M4.500 0v2.500M.5 3h5v2.500h-5zM3 5.500v5h3" stroke="#fff" />
        </Icon>
        <span className="w-[21px]" />
        <Icon size="size-[15px]" box="0 0 15 15">
          <path d="M1 14C1 6 6 1 14 1M4.500 14.500c0-6 3-9.500 9.500-9.500M8 14.500C8 11 10 9 14 9" stroke="#ccc" strokeWidth="1.200" />
          <circle cx="12.500" cy="13" r="1.500" fill="#fff" />
        </Icon>
        <span className="w-[18px]" />
        <Icon size="h-[14px] w-[18px]" box="0 0 18 14">
          <path d="M.5 4.500h3l4-3.500v12l-4-3.500h-3zM10 4.500c1 1.500 1 3.500 0 5M12.500 3c2 2.500 2 5.500 0 8M15 1.500c3 3 3 8 0 11" stroke="#ddd" />
        </Icon>
        <span className="w-[24px]" />
        <Icon size="size-[16px]" box="0 0 16 16">
          <path d="M5 13l1-4 7-8 2 1.500-7 9zM6 8c-5-1-7 4-4 6s5-1 6-3 3-3 4-2-1 3 1 3 2-1 2-1" stroke="#eee" strokeWidth="1.200" />
        </Icon>
        <span className="w-[24px]" />
        <Icon size="h-4 w-[25px]" box="0 0 25 16">
          <rect x=".5" y=".5" width="24" height="14.500" stroke="#ddd" />
          <path d="M3 4.500h19M3 7.500h19" stroke="#ddd" strokeDasharray="1.500 1.500" /><path d="M6.500 11.500h12M3 11.500h2M20 11.500h2" stroke="#ddd" />
        </Icon>
        <button type="button" className="w-[58px] text-center">
          ENG<br />US
        </button>
        <button type="button" className="w-[70px] text-center whitespace-nowrap">
          <time dateTime="2019-04-01T12:51">12:51 PM<br />2019-04-01</time>
        </button>
        <button type="button" aria-label="Notifications" className="flex w-[62px] justify-center">
          <Icon size="size-5" box="0 0 20 20"><path d="M.5 1.500h18v13h-6l-3 3-3-3h-6z" stroke="#ddd" /></Icon>
        </button>
        <span className="mr-[5px] w-px self-stretch bg-[#6b7268]" />
      </div>
    </footer>
  );
}

export default function App() {
  return (
    <div className="flex h-screen flex-col overflow-hidden bg-[#f4f4f4] font-['Open_Sans',sans-serif]">
      <TitleBar />
      <MenuBar />
      <MainToolbar />
      <TabStrip />
      <div className="flex min-h-0 flex-1">
        <SideBar />
        <main className="flex min-w-0 flex-1 flex-col border-l border-[#333]">
          <ToolPanel />
          <Viewer />
        </main>
      </div>
      <StatusBar />
      <TaskBar />
    </div>
  );
}
